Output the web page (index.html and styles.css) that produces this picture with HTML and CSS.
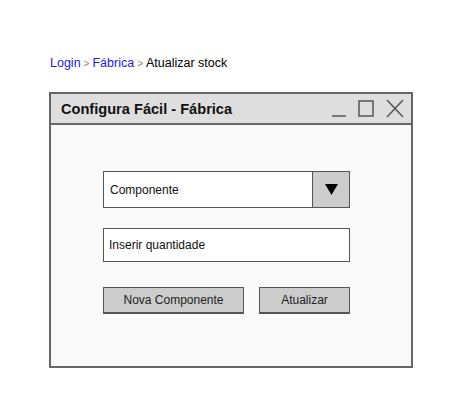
FILE: index.html
```html
<!DOCTYPE html>
<html>
<head>
<meta charset="utf-8">
<link rel="stylesheet" href="styles.css">
</head>
<body>
<nav class="crumbs">
  <a class="link">Login</a><span class="sep">&gt;</span><a class="link">Fábrica</a><span class="sep">&gt;</span><span class="current">Atualizar stock</span>
</nav>
<div class="window">
  <div class="titlebar">
    <span class="title">Configura Fácil - Fábrica</span>
    <svg class="controls" width="74" height="20" viewBox="0 0 74 20">
      <line x1="1" y1="17" x2="15" y2="17" stroke="#555" stroke-width="1.5"/>
      <rect x="28" y="2" width="14" height="15" fill="none" stroke="#555" stroke-width="1.5"/>
      <line x1="56" y1="1" x2="72" y2="18" stroke="#555" stroke-width="1.5"/>
      <line x1="72" y1="1" x2="56" y2="18" stroke="#555" stroke-width="1.5"/>
    </svg>
  </div>
  <div class="content">
    <div class="select">
      <span class="select-label">Componente</span>
      <span class="select-btn">
        <svg width="13" height="11" viewBox="0 0 13 11"><polygon points="0,0 13,0 6.5,11" fill="#000"/></svg>
      </span>
    </div>
    <div class="input">Inserir quantidade</div>
    <div class="buttons">
      <div class="btn btn-new">Nova Componente</div>
      <div class="btn btn-update">Atualizar</div>
    </div>
  </div>
</div>
</body>
</html>
```

FILE: styles.css
```css
html, body {
  margin: 0;
  padding: 0;
  background: #ffffff;
}
body {
  font-family: "Liberation Sans", Arial, sans-serif;
  width: 463px;
  height: 417px;
  overflow: hidden;
}
.crumbs {
  padding: 55px 0 0 50px;
  height: 16px;
  font-size: 12.5px;
  line-height: 16px;
  color: #000;
}
.link {
  color: #2020ee;
}
.sep {
  color: #888;
  font-size: 10px;
  margin: 0 3px;
}
.current {
  color: #000;
}
.window {
  margin: 21px 0 0 49px;
  width: 364px;
  height: 276px;
  box-sizing: border-box;
  border: 2px solid #666;
  background: #f9f9f9;
  display: flex;
  flex-direction: column;
}
.titlebar {
  height: 29px;
  border-bottom: 2px solid #666;
  background: #dedede;
  display: flex;
  align-items: center;
  justify-content: space-between;
  padding: 0 6px 0 10px;
}
.title {
  font-weight: bold;
  font-size: 14.6px;
  color: #111;
  padding-top: 1px;
}
.controls {
  display: block;
  margin-top: 1px;
}
.content {
  padding: 46px 0 0 52px;
  display: flex;
  flex-direction: column;
}
.select {
  width: 247px;
  height: 37px;
  box-sizing: border-box;
  border: 1px solid #555;
  background: #fff;
  display: flex;
  align-items: stretch;
}
.select-label {
  flex: 1;
  display: flex;
  align-items: center;
  padding-left: 6px;
  font-size: 12px;
  color: #111;
}
.select-btn {
  width: 36px;
  border-left: 1px solid #555;
  background: #cccccc;
  display: flex;
  align-items: center;
  justify-content: center;
}
.select-btn svg {
  display: block;
}
.input {
  margin-top: 20px;
  width: 247px;
  height: 34px;
  box-sizing: border-box;
  border: 1px solid #555;
  background: #fff;
  display: flex;
  align-items: center;
  padding-left: 5px;
  font-size: 12px;
  color: #111;
}
.buttons {
  margin-top: 25px;
  display: flex;
  gap: 15px;
}
.btn {
  height: 27px;
  box-sizing: border-box;
  border: 1px solid #555;
  border-bottom-width: 2px;
  background: #cccccc;
  display: flex;
  align-items: center;
  justify-content: center;
  font-size: 12px;
  color: #222;
}
.btn-new {
  width: 141px;
}
.btn-update {
  width: 91px;
}
```
